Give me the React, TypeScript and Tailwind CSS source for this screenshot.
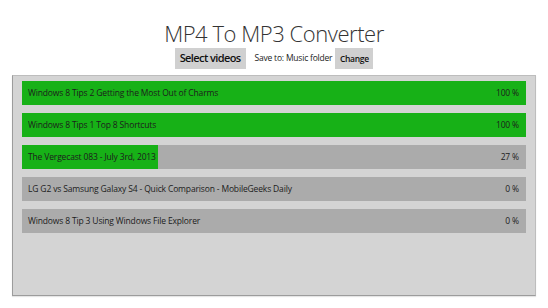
const rows = [
  { name: "Windows 8 Tips 2 Getting the Most Out of Charms", progress: 100 },
  { name: "Windows 8 Tips 1 Top 8 Shortcuts", progress: 100 },
  { name: "The Vergecast 083 - July 3rd, 2013", progress: 27 },
  { name: "LG G2 vs Samsung Galaxy S4 - Quick Comparison - MobileGeeks Daily", progress: 0 },
  { name: "Windows 8 Tip 3 Using Windows File Explorer", progress: 0 },
];

function ProgressRow({ name, progress }: { name: string; progress: number }) {
  return (
    <div className="relative h-6 bg-[#ababab] text-[8.5px] tracking-[-0.15px] text-[#1c1c1c]">
      <div className="absolute inset-y-0 left-0 bg-[#17b117]" style={{ width: `${progress}%` }} />
      <div className="relative flex h-full items-center justify-between pl-[6px] pr-[7px]">
        <span>{name}</span>
        <span>{progress} %</span>
      </div>
    </div>
  );
}

export default function App() {
  return (
    <div
      className="h-[308px] w-[548px] bg-white"
      style={{ fontFamily: '"Open Sans", "Noto Sans", sans-serif' }}
    >
      <div className="flex flex-col items-center pt-[18px]">
        <h1 className="text-[22px] font-light leading-[30px] tracking-[-0.45px] text-[#333]">
          MP4 To MP3 Converter
        </h1>
        <div className="flex items-center">
          <button className="h-[21px] bg-[#d0d0d0] px-[5px] text-[11px] font-semibold tracking-[-0.6px] text-[#111]">
            Select videos
          </button>
          <span className="ml-[9px] text-[8.5px] tracking-[-0.2px] text-[#222]">Save to: Music folder</span>
          <button className="ml-[3px] h-[21px] bg-[#d0d0d0] px-[4.5px] pt-[1px] text-[8.5px] font-semibold tracking-[-0.3px] text-[#111]">
            Change
          </button>
        </div>
      </div>
      <div className="mx-[12px] mt-[6px] flex h-[221px] flex-col gap-2 border border-[#bdbdbd] border-b-[#9c9c9c] border-l-[#9c9c9c] bg-[#d4d4d4] pl-[9px] pr-[9px] pt-[5px] shadow-[0_1px_1px_rgba(0,0,0,0.1)]">
        {rows.map((r) => (
          <ProgressRow key={r.name} name={r.name} progress={r.progress} />
        ))}
      </div>
    </div>
  );
}
